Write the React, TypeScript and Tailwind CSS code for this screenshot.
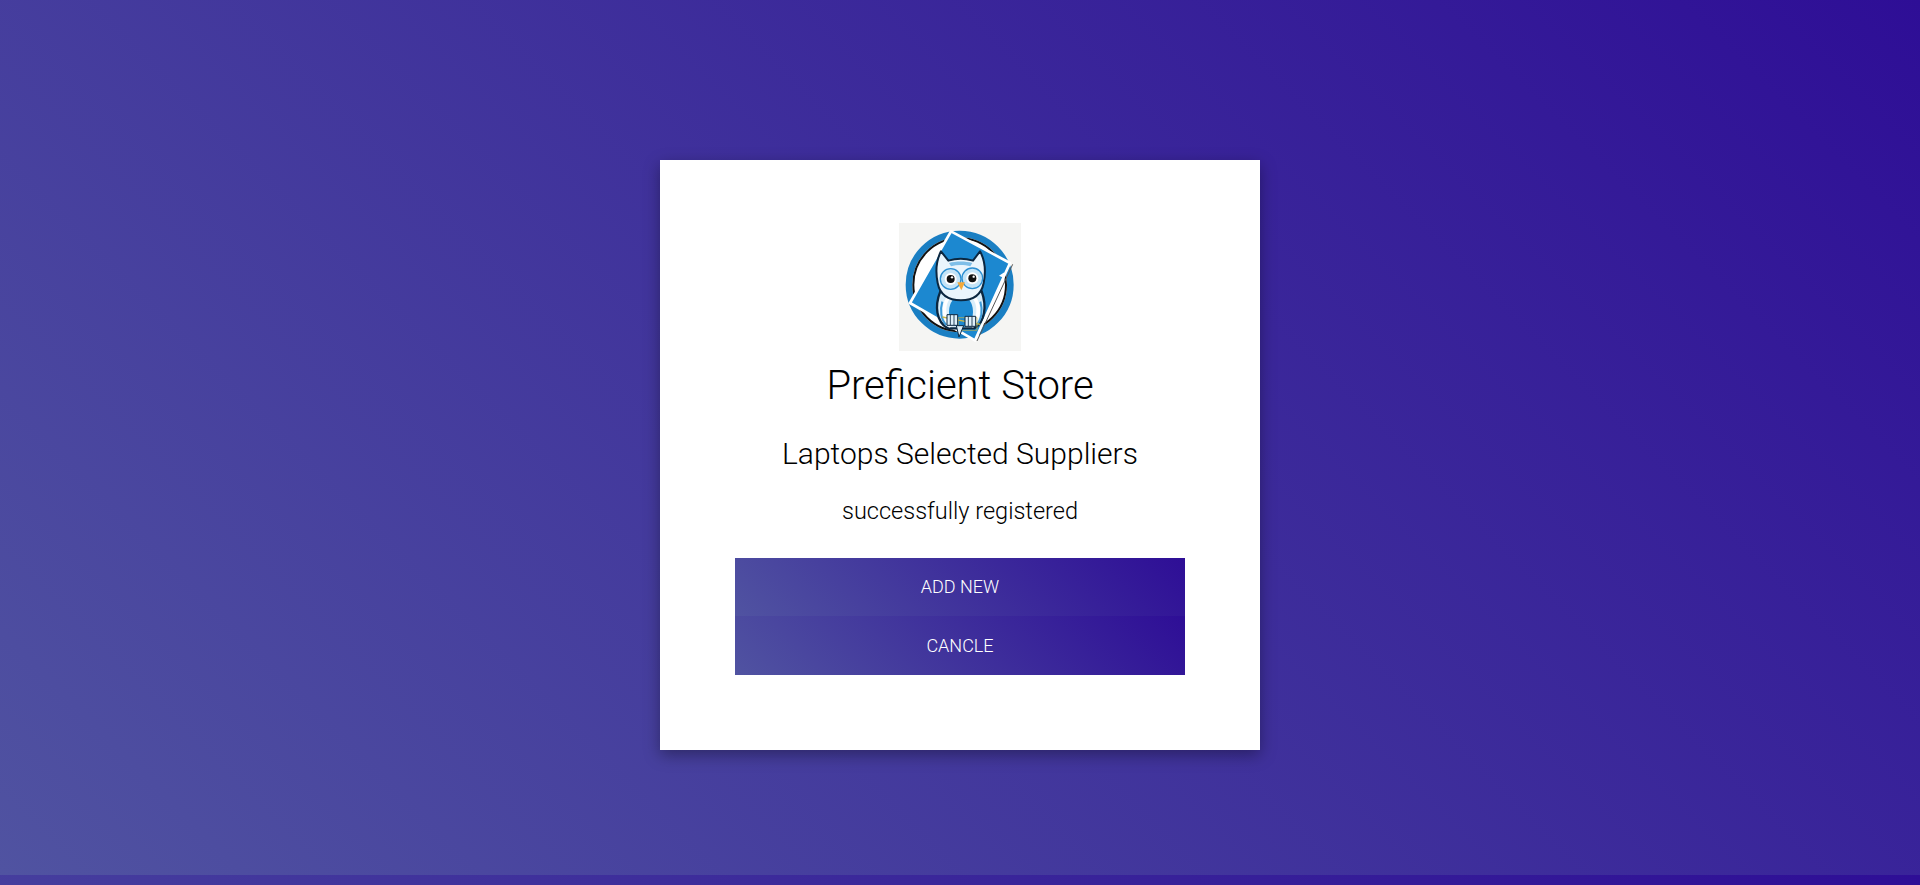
import React from 'react';

// Owl logo, drawn in a 366x384 box (3x the on-screen size)
const OwlLogo: React.FC = () => (
  <svg viewBox="0 0 366 384" className="block w-[122px] h-[128px] bg-[#f5f5f3]">
    {/* ring */}
    <circle cx="182" cy="185" r="152" fill="#ffffff" stroke="#1a7fc3" strokeWidth="20" />
    <circle cx="182" cy="185" r="139" fill="none" stroke="#111111" strokeWidth="6" />
    {/* tilted card */}
    <polygon points="156,25 333,120 228,352 33,240" fill="#1c88d0" stroke="#ffffff" strokeWidth="8" strokeLinejoin="round" />
    <path d="M341 124 L234 354" stroke="#555555" strokeWidth="3" fill="none" />
    <path d="M300 158 L316 148 L316 166 Z" fill="#ffffff" />
    {/* body */}
    <path d="M124 205 C106 250 112 296 146 316 L226 316 C258 296 264 250 248 205 Z" fill="#d9eefa" stroke="#0b2740" strokeWidth="7" />
    <path d="M146 226 C130 254 134 288 156 310 M228 226 C244 254 240 288 218 310" fill="none" stroke="#ffffff" strokeWidth="11" />
    <path d="M130 236 C122 262 126 290 142 306 M244 236 C252 262 248 290 232 306" fill="none" stroke="#3d9ad8" strokeWidth="6" />
    <ellipse cx="186" cy="266" rx="36" ry="48" fill="#1c88d0" />
    {/* head */}
    <path d="M126 85 L148 113 C170 106 200 106 222 113 L243 85 C258 112 260 150 254 180 C246 220 216 232 186 232 C152 232 124 220 116 180 C110 150 112 112 126 85 Z" fill="#eaf5fc" stroke="#0b2740" strokeWidth="6" strokeLinejoin="round" />
    <path d="M150 120 C170 114 200 114 220 120 L214 130 C196 125 174 125 156 130 Z" fill="#7fbfe8" />
    {/* eyes */}
    <circle cx="155" cy="168" r="31" fill="#c4e4f7" stroke="#2b8fd2" strokeWidth="4" />
    <circle cx="220" cy="166" r="31" fill="#c4e4f7" stroke="#2b8fd2" strokeWidth="4" />
    <circle cx="155" cy="168" r="18" fill="#ffffff" />
    <circle cx="220" cy="166" r="18" fill="#ffffff" />
    <circle cx="155" cy="168" r="12" fill="#111111" />
    <circle cx="220" cy="166" r="12" fill="#111111" />
    <circle cx="159" cy="163" r="3.5" fill="#ffffff" />
    <circle cx="224" cy="161" r="3.5" fill="#ffffff" />
    {/* beak */}
    <path d="M175 178 L198 178 L187 202 Z" fill="#f2a93b" />
    {/* branch and feet */}
    <path d="M130 282 L244 304" stroke="#c9b64a" strokeWidth="4" />
    <path d="M178 284 H234 V322 H178 Z" fill="none" stroke="#c9b64a" strokeWidth="2" />
    <path d="M144 275 h32 v32 h-32 Z M198 280 h32 v30 h-32 Z" fill="#dff0fa" stroke="#0b2740" strokeWidth="3" />
    <path d="M154 276 v30 M165 276 v30 M208 281 v28 M219 281 v28" stroke="#0b2740" strokeWidth="2.5" />
    <path d="M172 308 L180 342 L194 308 Z" fill="#dff0fa" stroke="#0b2740" strokeWidth="3" />
  </svg>
);

export default function App() {
  return (
    <div className="min-h-[885px] pt-[160px] bg-[linear-gradient(45deg,#5053a1,#2e0e96)] bg-[length:100%_875px] font-['Roboto',sans-serif]">
      <div className="mx-auto w-[600px] h-[590px] pt-[63px] bg-white shadow-[0_5px_15px_rgba(0,0,0,0.35)] text-center text-black font-light">
        <div className="flex justify-center">
          <OwlLogo />
        </div>
        <h1 className="mt-[9px] text-[40px] leading-[52px] font-light">Preficient Store</h1>
        <h2 className="mt-[22px] text-[30px] leading-[40px] font-light">Laptops Selected Suppliers</h2>
        <p className="mt-[21px] text-[23.5px] leading-[32px] font-light">successfully registered</p>
        <div className="mx-auto mt-[31px] w-[450px]">
          <button className="block w-full h-[58px] bg-[linear-gradient(45deg,#5053a1,#2e0e96)] text-white text-lg font-light uppercase">
            Add New
          </button>
          <button className="block w-full h-[59px] bg-[linear-gradient(45deg,#5053a1,#2e0e96)] text-white text-lg font-light uppercase">
            Cancle
          </button>
        </div>
      </div>
    </div>
  );
}
